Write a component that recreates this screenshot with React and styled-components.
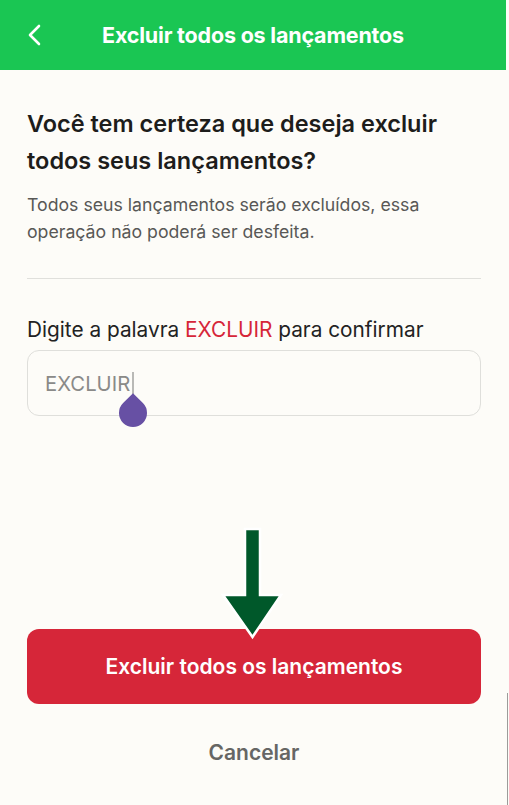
import React from 'react';
import styled, { createGlobalStyle } from 'styled-components';

const GlobalStyle = createGlobalStyle`
  * { box-sizing: border-box; }
  html, body {
    margin: 0;
    padding: 0;
    background: #fdfcf8;
    font-family: Inter, "Noto Sans", "Liberation Sans", sans-serif;
  }
`;

const Page = styled.div`
  position: relative;
  min-height: 805px;
  display: flex;
  flex-direction: column;
  background: #fdfcf8;
  overflow: hidden;
`;

const Header = styled.header`
  height: 70px;
  margin-right: 3px;
  background: #1ac653;
  display: flex;
  align-items: center;
  justify-content: center;
  position: relative;
`;

const BackButton = styled.button`
  position: absolute;
  left: 20px;
  top: 50%;
  transform: translateY(-50%);
  width: 28px;
  height: 34px;
  border: 0;
  padding: 0;
  background: none;
  display: flex;
  align-items: center;
  justify-content: center;
`;

const HeaderTitle = styled.h1`
  margin: 0;
  color: #fff;
  font-size: 21.5px;
  font-weight: 700;
  letter-spacing: -0.2px;
`;

const Content = styled.main`
  flex: 1;
  display: flex;
  flex-direction: column;
  padding: 35px 28px 23px 27px;
`;

const Title = styled.h2`
  margin: 0;
  font-size: 23.5px;
  line-height: 37px;
  font-weight: 600;
  color: #1d1d1b;
`;

const Description = styled.p`
  margin: 12px 0 0;
  font-size: 17.7px;
  line-height: 27px;
  color: #585856;
`;

const Divider = styled.hr`
  margin: 33px 0 0;
  border: 0;
  height: 1px;
  background: #e0e0dc;
`;

const Label = styled.label`
  margin-top: 37px;
  font-size: 20.8px;
  line-height: 28px;
  color: #222;
`;

const Highlight = styled.span`
  color: #d62639;
`;

const Field = styled.div`
  margin-top: 6px;
  height: 66px;
  border: 1.5px solid #dfdfdb;
  border-radius: 12px;
  background: #fdfcf8;
  display: flex;
  align-items: center;
  padding: 0 17px;
  font-size: 20.3px;
  color: #8a8a88;
`;

const Caret = styled.span`
  position: relative;
  display: inline-block;
  width: 1.5px;
  height: 22px;
  margin-left: 2px;
  background: #b9b9b6;
  vertical-align: middle;
`;

const Drop = styled.span`
  position: absolute;
  left: 50%;
  top: 27px;
  width: 28px;
  height: 28px;
  margin-left: -14px;
  background: #6750a4;
  border-radius: 0 50% 50% 50%;
  transform: rotate(45deg);
  transform-origin: 50% 50%;
`;

const Spacer = styled.div`
  flex: 1;
`;

const DangerButton = styled.button`
  height: 75px;
  border: 0;
  border-radius: 12px;
  background: #d62639;
  color: #fff;
  font-family: inherit;
  font-size: 21px;
  font-weight: 600;
`;

const TextButton = styled.button`
  margin-top: 18px;
  height: 60px;
  border: 0;
  background: none;
  color: #666664;
  font-family: inherit;
  font-size: 21px;
  font-weight: 600;
`;

const Pointer = styled.svg`
  position: absolute;
  left: 220px;
  top: 526px;
`;

const ScrollEdge = styled.div`
  position: absolute;
  right: 1px;
  top: 693px;
  bottom: 0;
  width: 1.5px;
  background: #9c9c9a;
`;

export default function App() {
  return (
    <Page>
      <GlobalStyle />
      <Header>
        <BackButton aria-label="Voltar">
          <svg width="16" height="24" viewBox="0 0 16 24">
            <polyline
              points="13,3 4,12 13,21"
              fill="none"
              stroke="#fff"
              strokeWidth="2.6"
              strokeLinecap="round"
              strokeLinejoin="round"
            />
          </svg>
        </BackButton>
        <HeaderTitle>Excluir todos os lançamentos</HeaderTitle>
      </Header>
      <Content>
        <Title>Você tem certeza que deseja excluir todos seus lançamentos?</Title>
        <Description>
          Todos seus lançamentos serão excluídos, essa operação não poderá ser desfeita.
        </Description>
        <Divider />
        <Label>
          Digite a palavra <Highlight>EXCLUIR</Highlight> para confirmar
        </Label>
        <Field>
          EXCLUIR
          <Caret>
            <Drop />
          </Caret>
        </Field>
        <Spacer />
        <DangerButton>Excluir todos os lançamentos</DangerButton>
        <TextButton>Cancelar</TextButton>
      </Content>
      <Pointer width="64" height="114" viewBox="0 0 64 114">
        <polygon
          points="25,3 40,3 40,69 61,69 32.5,111 3,69 25,69"
          fill="#00582a"
          stroke="#fff"
          strokeWidth="2.5"
          strokeLinejoin="miter"
        />
      </Pointer>
      <ScrollEdge />
    </Page>
  );
}
